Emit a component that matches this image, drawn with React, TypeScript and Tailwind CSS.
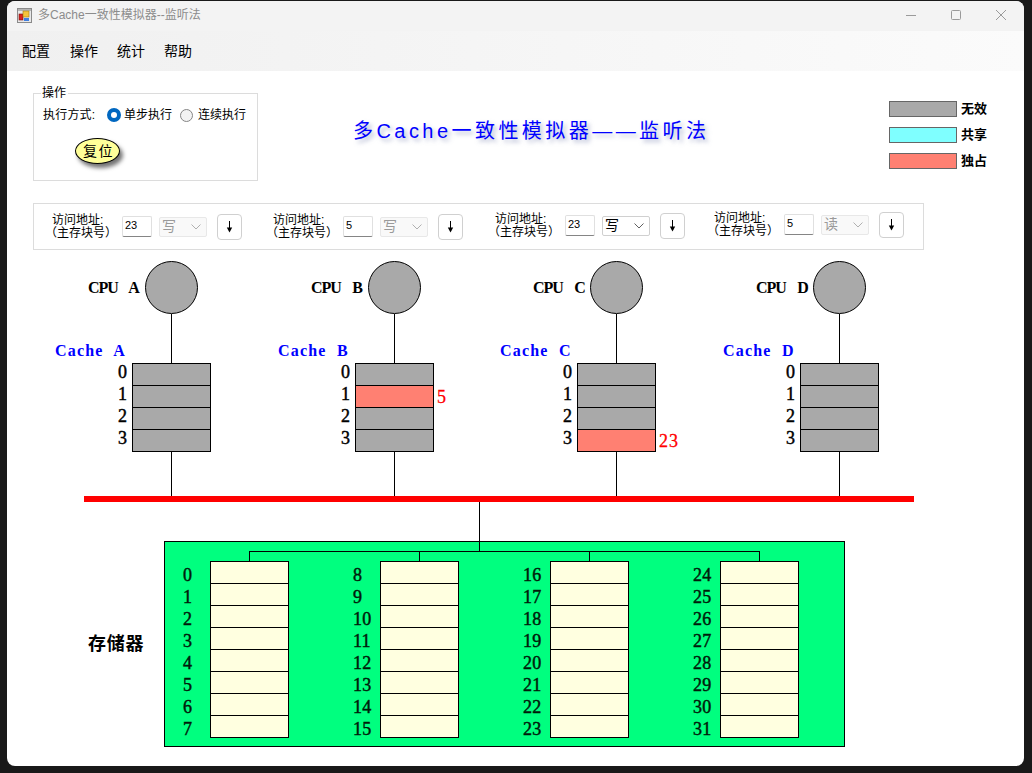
import React from "react";

const ui = "font-['Liberation_Sans','Noto_Sans_CJK_SC',sans-serif]";
const serif = "font-['Liberation_Serif','Noto_Sans_CJK_SC',serif]";

function AppIcon() {
  return (
    <svg width="15" height="15" viewBox="0 0 15 15" className="shrink-0">
      <rect x="0.5" y="0.5" width="14" height="14" fill="#e8e8e8" stroke="#8a8a8a" />
      <rect x="1" y="1" width="13" height="2" fill="#b5b5b5" />
      <rect x="2" y="6" width="4" height="6" fill="#d8231f" stroke="#7a1010" strokeWidth="0.6" />
      <rect x="6" y="3" width="6" height="6" fill="#f5c33b" stroke="#a67c10" strokeWidth="0.6" />
      <rect x="7" y="10" width="5" height="3" fill="#3f7fe0" />
    </svg>
  );
}

function Radio({ on }: { on?: boolean }) {
  return on ? (
    <span className="block w-[14px] h-[14px] rounded-full bg-white border-[4px] border-[#0067c0]" />
  ) : (
    <span className="block w-[13px] h-[13px] rounded-full bg-[#f3f3f3] border border-[#858585]" />
  );
}

function ArrowDown() {
  return (
    <svg width="7" height="12" viewBox="0 0 7 12">
      <path d="M3.5 0V8" stroke="#000" strokeWidth="1" />
      <path d="M0.8 6.5H6.2L3.5 11.5Z" fill="#000" />
    </svg>
  );
}

const controls = [
  { value: "23", op: "写", enabled: false, cls: "mr-[31px]" },
  { value: "5", op: "写", enabled: false, cls: "mr-[32px]" },
  { value: "23", op: "写", enabled: true, cls: "mr-[29px] mb-[2px]" },
  { value: "5", op: "读", enabled: false, cls: "mb-[4px]" },
];

function Control({ value, op, enabled, cls }: { value: string; op: string; enabled: boolean; cls: string }) {
  return (
    <div className={`flex items-center w-[190px] ${cls}`}>
      <div className="w-[70px] text-[12px] leading-[13px] text-black whitespace-nowrap">
        <div>访问地址:</div>
        <div className="-ml-[7px]">（主存块号）</div>
      </div>
      <input
        readOnly
        value={value}
        className="w-[30px] h-[21px] px-[2px] pb-[3px] text-[11px] bg-white border border-[#e0e0e0] border-b-[#858585] rounded-[2px] outline-none"
      />
      <div
        className={`ml-[7px] w-[48px] h-[20px] flex items-center justify-between pl-[2px] pr-[5px] rounded-[2px] border text-[14px] ${
          enabled ? "bg-white border-[#d0d0d0] text-black" : "bg-[#f9f9f9] border-[#e8e8e8] text-[#9a9a9a]"
        }`}
      >
        <span>{op}</span>
        <svg width="10" height="6" viewBox="0 0 10 6" fill="none">
          <path d="M0.5 0.5L5 5L9.5 0.5" stroke={enabled ? "#606060" : "#b0b0b0"} />
        </svg>
      </div>
      <button className="ml-[10px] w-[25px] h-[26px] flex items-center justify-center bg-white border border-[#d0d0d0] rounded-[4px]">
        <ArrowDown />
      </button>
    </div>
  );
}

const caches = [
  { name: "A", state: ["i", "i", "i", "i"], vals: ["", "", "", ""], cls: "w-[223px]" },
  { name: "B", state: ["i", "e", "i", "i"], vals: ["", "5", "", ""], cls: "w-[222px]" },
  { name: "C", state: ["i", "i", "i", "e"], vals: ["", "", "", "23"], cls: "w-[223px]" },
  { name: "D", state: ["i", "i", "i", "i"], vals: ["", "", "", ""], cls: "w-[223px]" },
];

function CacheCol({ name, state, vals, cls }: { name: string; state: string[]; vals: string[]; cls: string }) {
  return (
    <div className={`flex ${cls}`}>
      <div className={`w-[99px] shrink-0 ${serif}`}>
        <div className="h-[53px] pl-[55px] flex items-center whitespace-pre font-bold text-[16px] tracking-[-1.1px] text-black">{`CPU    ${name}`}</div>
        <div className="mt-[28px] h-[18px] pl-[22px] flex items-center whitespace-pre font-bold text-[16px] tracking-[1.2px] text-[#0000ff]">{`Cache  ${name}`}</div>
        <div className="mt-[2px] flex flex-col items-end pr-[5px] text-[18px] text-black [-webkit-text-stroke:0.45px_#000]">
          {[0, 1, 2, 3].map((n) => (
            <div key={n} className="h-[22px] leading-[20px]">
              {n}
            </div>
          ))}
        </div>
      </div>
      <div className="w-[79px] shrink-0 flex flex-col items-center">
        <div className="w-[53px] h-[53px] rounded-full bg-[#a9a9a9] border border-black" />
        <div className="w-px h-[49px] bg-black" />
        <div className="w-full border-b border-black">
          {state.map((s, i) => (
            <div
              key={i}
              className={`h-[22px] border-t border-x border-black ${s === "e" ? "bg-[#ff8072]" : "bg-[#a9a9a9]"}`}
            />
          ))}
        </div>
        <div className="w-px h-[44px] bg-black" />
      </div>
      <div className={`mt-[102px] pl-[3px] text-[18px] ${serif} text-[#ff0000] [-webkit-text-stroke:0.3px_#ff0000]`}>
        {vals.map((v, i) => (
          <div key={i} className="h-[22px] leading-[24px] tracking-[1px]">
            {v}
          </div>
        ))}
      </div>
    </div>
  );
}

const memCols = [0, 8, 16, 24];

function MemCol({ start }: { start: number }) {
  const rows = [0, 1, 2, 3, 4, 5, 6, 7];
  return (
    <div className="w-[170px] flex shrink-0">
      <div className={`w-[45px] pl-[18px] pt-[12px] text-[18px] text-[#001a0a] [-webkit-text-stroke:0.45px_#001a0a] ${serif}`}>
        {rows.map((r) => (
          <div key={r} className="h-[22px] leading-[22px] tracking-[0.2px]">
            {start + r}
          </div>
        ))}
      </div>
      <div className="w-[79px] flex flex-col items-center">
        <div className="w-px h-[9px] bg-black" />
        <div className="w-full border-b border-black">
          {rows.map((r) => (
            <div key={r} className="h-[22px] border-t border-x border-black bg-[#ffffe0]" />
          ))}
        </div>
      </div>
    </div>
  );
}

const legend = [
  { label: "无效", cls: "bg-[#a9a9a9]" },
  { label: "共享", cls: "bg-[#7fffff]" },
  { label: "独占", cls: "bg-[#ff8072]" },
];

export default function App() {
  return (
    <div className={`w-[1032px] h-[773px] bg-[#191919] pt-px pl-[7px] pr-[8px] pb-[7px] ${ui}`}>
      <div className="w-full h-full bg-white rounded-[8px] overflow-hidden flex flex-col">
        <div className="h-[30px] shrink-0 bg-[#f3f3f3] flex items-center pl-[10px] pb-[2px]">
          <AppIcon />
          <span className="ml-[6px] text-[12px] text-[#8c8c8c]">多Cache一致性模拟器--监听法</span>
          <div className="ml-auto flex items-center pr-[18px] gap-[35px]">
            <svg width="10" height="10" viewBox="0 0 10 10"><path d="M0 5.5H10" stroke="#9a9a9a" /></svg>
            <svg width="10" height="10" viewBox="0 0 10 10" fill="none"><rect x="0.5" y="0.5" width="9" height="9" rx="1" stroke="#9a9a9a" /></svg>
            <svg width="10" height="10" viewBox="0 0 10 10" fill="none"><path d="M0 0L10 10M10 0L0 10" stroke="#9a9a9a" /></svg>
          </div>
        </div>
        <div className="h-[40px] shrink-0 bg-gradient-to-r from-[#f0f0f0] to-[#fbfbfb] flex items-center pl-[15px] gap-[19px] text-[14px] text-black">
          <span className="mr-px">配置</span>
          <span>操作</span>
          <span>统计</span>
          <span>帮助</span>
        </div>

        <div className="flex pl-[26px] pt-[15px] h-[132px] shrink-0">
          <fieldset className="w-[225px] h-[95px] border border-[#dcdcdc] pl-[9px]">
            <legend className="ml-[-2px] pl-[1px] pr-[2px] text-[12px] leading-[14px] text-black">操作</legend>
            <div className="flex items-center text-[12px] h-[20px] mt-[5px] whitespace-nowrap">
              <span className="w-[64px] tracking-[0.2px]">执行方式:</span>
              <Radio on />
              <span className="ml-[3px] w-[56px]">单步执行</span>
              <Radio />
              <span className="ml-[5px]">连续执行</span>
            </div>
            <button className="block mt-[13px] ml-[32px] pl-[2px] w-[45px] h-[26px] rounded-[50%] bg-[#ffff99] border border-black shadow-[3px_4px_4px_rgba(0,0,0,0.55)] text-[14px] tracking-[1.5px] leading-none text-black">
              复位
            </button>
          </fieldset>
          <div className="ml-[95px] mt-[29px] h-[32px] text-[20px] leading-[32px] tracking-[3.45px] text-[#0000ff] whitespace-nowrap [text-shadow:3px_3px_4px_rgba(110,120,170,0.55)]">
            多Cache一致性模拟器——监听法
          </div>
          <div className="ml-auto mr-[37px] mt-[15px] flex flex-col gap-[10px]">
            {legend.map((l) => (
              <div key={l.label} className="flex items-center h-[16px]">
                <div className={`w-[68px] h-[16px] border border-[#666666] ${l.cls}`} />
                <span className="ml-[4px] text-[13px] font-bold text-black">{l.label}</span>
              </div>
            ))}
          </div>
        </div>

        <div className="ml-[26px] w-[891px] h-[47px] shrink-0 border border-[#dcdcdc] pl-[18px] flex items-center">
          {controls.map((c, i) => (
            <Control key={i} {...c} />
          ))}
        </div>

        <div className="ml-[26px] mt-[11px] flex shrink-0 h-[235px]">
          {caches.map((c) => (
            <CacheCol key={c.name} {...c} />
          ))}
        </div>

        <div className="ml-[77px] w-[830px] h-[6px] shrink-0 bg-[#ff0000]" />

        <div className="ml-[472px] w-px h-[39px] shrink-0 bg-black" />

        <div className="flex items-center shrink-0 pl-[81px]">
          <div className={`w-[76px] text-[18px] tracking-[0.7px] font-bold text-black ${serif}`}>存储器</div>
          <div className="w-[681px] h-[206px] bg-[#00ff7f] border border-black">
            <div className="ml-[314px] w-px h-[9px] bg-black" />
            <div className="ml-[84px] w-[511px] h-px bg-black" />
            <div className="flex">
              {memCols.map((s) => (
                <MemCol key={s} start={s} />
              ))}
            </div>
          </div>
        </div>
      </div>
    </div>
  );
}
